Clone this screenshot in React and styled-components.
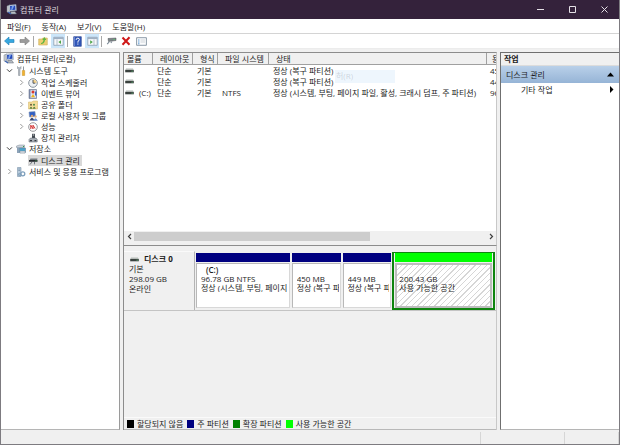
import React, { useState } from 'react'
import styled, { createGlobalStyle, css } from 'styled-components'

const GlobalStyle = createGlobalStyle`
  * {
    box-sizing: border-box;
  }

  body {
    margin: 0;
    background: #f0f0f0;
    color: #1c1c1c;
    font-family: "Open Sans", "Noto Sans CJK KR", sans-serif;
    font-size: 8px;
    line-height: 11px;
  }

  button {
    padding: 0;
    border: 0;
    background: none;
    color: inherit;
    font: inherit;
  }

  svg {
    display: block;
    flex: none;
  }
`

const Window = styled.div`
  min-height: 100vh;
  display: flex;
  flex-direction: column;
  border: 1px solid #7d7b80;
  border-top: 0;
`

const TitleBar = styled.header`
  height: 19px;
  display: flex;
  align-items: center;
  gap: 3px;
  padding-left: 5px;
  background: #34223b;
  color: #dcd8de;
`

const Title = styled.h1`
  flex: 1;
  margin: 0;
  font-size: 8px;
  font-weight: 400;
`

const WindowButton = styled.button`
  width: 29px;
  height: 19px;
  display: flex;
  align-items: center;
  justify-content: center;
`

const MenuBar = styled.nav`
  height: 15px;
  display: flex;
  align-items: center;
  gap: 11px;
  padding-left: 6px;
  background: #fff;
  border-bottom: 1px solid #d4d4d4;
`

const ToolBar = styled.div`
  height: 15px;
  display: flex;
  align-items: center;
  gap: 1px;
  padding-left: 1px;
  background: #fff;
  border-bottom: 1px solid #ececec;
`

const ToolButton = styled.button`
  width: 14px;
  height: 14px;
  display: flex;
  align-items: center;
  justify-content: center;
  background: ${(props) => (props.$active ? '#cce6fa' : 'transparent')};
`

const Separator = styled.span`
  width: 1px;
  height: 11px;
  margin: 0 1px;
  background: #a8a8a8;
`

const Panels = styled.main`
  flex: 1;
  display: flex;
  gap: 3px;
  padding-top: 3px;
`

const sunken = css`
  border: 1px solid #9a9a9a;
  border-bottom-color: #b5b5b5;
`

const TreePanel = styled.aside`
  ${sunken}
  flex: 0 0 119px;
  background: #fff;
  border-left: 0;
  overflow: hidden;
`

const TreeList = styled.ul`
  margin: 0;
  padding: 1px 0 0;
  list-style: none;
`

const TreeRow = styled.div`
  height: 11px;
  display: flex;
  align-items: center;
  gap: 3px;
  padding-left: ${(props) => [2, 4, 16][props.$level]}px;
  white-space: nowrap;
`

const Toggle = styled.button`
  width: 8px;
  height: 11px;
  display: flex;
  align-items: center;
  justify-content: center;
`

const TreeLabel = styled.span`
  height: 11px;
  display: flex;
  align-items: center;
  gap: 3px;
  padding-right: 2px;
  background: ${(props) => (props.$selected ? '#d9d9d9' : 'transparent')};
`

const Center = styled.section`
  flex: 1;
  min-width: 0;
  display: flex;
  flex-direction: column;
`

const VolumePane = styled.div`
  ${sunken}
  position: relative;
  flex: 1 1 194px;
  display: flex;
  flex-direction: column;
  justify-content: space-between;
  background: #fff;
  border-color: #8c8c8c;
  border-right-color: #c8c8c8;
  overflow: hidden;
`

const VolumeTable = styled.table`
  width: 100%;
  table-layout: fixed;
  border-collapse: separate;
  border-spacing: 0;

  th {
    height: 12px;
    padding: 0 0 0 7px;
    background: #f0f0f0;
    border-right: 1px solid #a0a0a0;
    border-bottom: 1px solid #a0a0a0;
    font-weight: 400;
    text-align: left;
    white-space: nowrap;
    overflow: hidden;
  }

  th:first-child {
    padding-left: 3px;
  }

  th:last-child {
    padding-left: 5px;
    border-right: 0;
  }

  td {
    height: 11px;
    padding: 0 0 0 4px;
    white-space: nowrap;
    overflow: hidden;
  }

  td:first-child {
    padding-left: 1px;
  }

  td:last-child {
    padding-left: 3px;
  }
`

const Column = styled.col`
  width: ${(props) => props.$width}px;
`

const VolumeName = styled.span`
  display: flex;
  align-items: center;
  gap: 5px;
`

const FadingMenuItem = styled.span`
  position: absolute;
  top: 17px;
  left: 211px;
  width: 60px;
  height: 13px;
  padding-left: 1px;
  background: rgba(222, 238, 252, 0.5);
  color: rgba(120, 130, 145, 0.3);
`

const ScrollBar = styled.div`
  height: 14px;
  display: flex;
  align-items: center;
  padding-bottom: 3px;
  background: #f0f0f0;
`

const ScrollButton = styled.button`
  width: 10px;
  height: 11px;
  display: flex;
  align-items: center;
  justify-content: center;
`

const ScrollTrack = styled.div`
  flex: 1;
`

const ScrollThumb = styled.div`
  width: 67%;
  height: 9px;
  background: #cdcdcd;
`

const DiskPane = styled.div`
  flex: 1 1 184px;
  display: flex;
  flex-direction: column;
  justify-content: space-between;
  border-left: 1px solid #8c8c8c;
  border-right: 1px solid #c8c8c8;
`

const DiskRow = styled.div`
  display: flex;
  align-items: stretch;
  margin-top: 5px;
  border-bottom: 1px solid #c4c4c4;
`

const DiskInfo = styled.div`
  flex: 0 0 71px;
  padding: 2px 0 16px 5px;
  border-top: 1px solid #fafafa;
  border-right: 1px solid #b4b4b4;
  line-height: 10px;
`

const DiskName = styled.div`
  display: flex;
  align-items: center;
  gap: 5px;
  padding-left: 1px;
  font-weight: 700;
`

const Partitions = styled.div`
  flex: 1;
  min-width: 0;
  display: flex;
  gap: 2px;
  padding: 1px 1px 0 1px;
`

const Partition = styled.div`
  flex: ${(props) => props.$size} 1 0;
  min-width: 0;
  display: flex;
  flex-direction: column;
  gap: 1px;
  padding-top: 1px;
  padding-bottom: 2px;
`

const ExtendedPartition = styled.div`
  flex: 97 1 0;
  min-width: 0;
  display: flex;
  flex-direction: column;
  gap: 1px;
  padding: 0 1px;
  margin-left: -1px;
  border: 2px solid #0f840f;
  border-top-width: 1px;
`

const PartitionBar = styled.div`
  height: 9px;
  background: ${(props) => props.$color};
`

const PartitionBody = styled.div`
  flex: 1;
  padding: 1px 1px 0 4px;
  border: 1px solid #b8b8b8;
  border-right-color: #d8d8d8;
  border-bottom-color: #d8d8d8;
  background: #fff;
  line-height: 9px;
  white-space: nowrap;
  overflow: hidden;

  ${(props) => props.$free && css`
    border: 2px solid #bdbdbd;
    padding: 0 2px;
    background: repeating-linear-gradient(135deg, #fff 0 3px, #d6d6d6 3px 4px);
  `}
`

const PartitionText = styled.div`
  height: 9px;
  overflow: hidden;
`

const PartitionName = styled.div`
  height: 9px;
  padding-left: 5px;
  font-weight: 600;
`

const Legend = styled.ul`
  height: 13px;
  display: flex;
  align-items: center;
  gap: 4px;
  margin: 0;
  padding: 0 3px;
  border-top: 1px solid #fafafa;
  border-bottom: 1px solid #b8b8b8;
  list-style: none;
  white-space: nowrap;
`

const LegendItem = styled.li`
  display: flex;
  align-items: center;
  gap: 3px;
`

const Swatch = styled.span`
  width: 7px;
  height: 8px;
  background: ${(props) => props.$color};
`

const ActionsPanel = styled.aside`
  ${sunken}
  flex: 0 0 119px;
  background: #fff;
  border-left-color: #6f6f6f;
  border-top-color: #6f6f6f;
  border-right: 0;
`

const ActionsTitle = styled.h2`
  height: 13px;
  margin: 0;
  padding-left: 3px;
  background: #f0f0f0;
  border-bottom: 1px solid #dcdcdc;
  font-size: 8px;
  font-weight: 700;
  line-height: 12px;
`

const ActionButton = styled.button`
  width: 100%;
  height: ${(props) => (props.$group ? 17 : 13)}px;
  display: flex;
  align-items: center;
  justify-content: space-between;
  padding: 0 5px 0 ${(props) => (props.$group ? 5 : 20)}px;
  background: ${(props) => (props.$group ? 'linear-gradient(#b9d0e9, #96b4d6)' : 'transparent')};
`

const StatusBar = styled.footer`
  height: 14px;
  display: flex;
  justify-content: flex-end;
  padding-top: 2px;
`

const StatusCell = styled.div`
  width: ${(props) => props.$width}px;
  border-left: 1px solid #d6d6d6;
`

const ComputerIcon = () => (
  <svg width="11" height="11" viewBox="0 0 11 11">
    <path d="M1 2l3-1v8l-3-1z" fill="#c9cdd2" stroke="#7d858e" strokeWidth=".5" />
    <path d="M3 1.2l7-.7.4 6-7 .7z" fill="#dfe6ee" stroke="#8190a6" strokeWidth=".6" />
    <path d="M4 2l5.2-.5.3 4.2-5.2.5z" fill="#2449b8" />
    <path d="M6 2l2 0-1.5 3.8-1.5.1z" fill="#7ba3ee" />
    <path d="M5 7.5h4l1.5 2.5h-6z" fill="#b5bbc3" stroke="#5f6771" strokeWidth=".5" />
    <path d="M2 8l3 2" stroke="#3a62b6" strokeWidth="1.2" />
  </svg>
)

const ToolsIcon = () => (
  <svg width="10" height="10" viewBox="0 0 10 10">
    <path d="M1.500.5v2l1 1v6h1.500v-6l1-1v-2l-1.200 1.300h-1z" fill="#b8bec6" stroke="#808891" strokeWidth=".5" />
    <path d="M7 .5h1v4h-1z" fill="#9097a0" />
    <path d="M6.300 4.500h2.400v5h-2.400z" fill="#f2b22d" stroke="#b67d14" strokeWidth=".4" />
  </svg>
)

const ClockIcon = () => (
  <svg width="10" height="10" viewBox="0 0 10 10">
    <circle cx="5" cy="5" r="4.300" fill="#eef1f4" stroke="#8b949e" strokeWidth="1" />
    <path d="M5 5v-3.600a3.600 3.600 0 0 1 3.600 3.600z" fill="#f4d28a" />
    <path d="M5 2v3.200h2.300" fill="none" stroke="#424b57" strokeWidth=".9" />
  </svg>
)

const EventIcon = () => (
  <svg width="10" height="10" viewBox="0 0 10 10">
    <path d="M1 .5h7.500v9h-7.500z" fill="#8290ad" stroke="#5c6781" strokeWidth=".5" />
    <path d="M2.500 1.200h5.500v7.600h-5.500z" fill="#dfe4f2" />
    <circle cx="5" cy="3" r="1.500" fill="#d9372c" />
    <path d="M3 8.300l2-3.300 2 3.300z" fill="#f0b51c" />
    <path d="M7 2.500h1.500v4h-1.500z" fill="#3b63c2" />
  </svg>
)

const SharedFolderIcon = () => (
  <svg width="10" height="10" viewBox="0 0 10 10">
    <path d="M.5 2h3.500l1-1h4.500v8h-9z" fill="#f3dc97" stroke="#d3b362" strokeWidth=".5" />
    <circle cx="3" cy="4.800" r="1" fill="#6c5b3a" />
    <circle cx="6" cy="4.800" r="1" fill="#4c8b4b" />
    <path d="M1.500 8.800q1.500-4 3 0zM4.700 8.800q1.500-4 3 0z" fill="#59803f" />
  </svg>
)

const UsersIcon = () => (
  <svg width="10" height="10" viewBox="0 0 10 10">
    <path d="M1 1l6-.5.500 5-6 .5z" fill="#315fc4" stroke="#8798b6" strokeWidth=".6" />
    <circle cx="4" cy="5" r="1.300" fill="#d7a374" />
    <path d="M1.500 9.500q2.500-5.500 5 0z" fill="#35426d" />
    <circle cx="7.500" cy="5.500" r="1.200" fill="#e1b587" />
    <path d="M5.200 9.700q2.300-5 4.600 0z" fill="#6a89c9" />
  </svg>
)

const PerformanceIcon = () => (
  <svg width="10" height="10" viewBox="0 0 10 10">
    <circle cx="5" cy="5" r="4.300" fill="#fff" stroke="#8d8d92" strokeWidth=".9" />
    <path d="M2.800 7v-3.800l2.200 3.600v-3.600l2 3.300" fill="none" stroke="#d22f2f" strokeWidth="1" />
  </svg>
)

const DeviceIcon = () => (
  <svg width="10" height="10" viewBox="0 0 10 10">
    <path d="M4 .8h3v4.700h-3z" fill="#424850" />
    <path d="M4.700 1.500h1.500v1h-1.500z" fill="#d6dade" />
    <path d="M1 6.500l1.500-1.500h5.500l1.200 1.500v2.500h-8.200z" fill="#a9afb6" stroke="#555c65" strokeWidth=".5" />
    <path d="M2 7h2v1.200h-2zM6.500 7h1.800v1.200h-1.800z" fill="#353a41" />
  </svg>
)

const StorageIcon = () => (
  <svg width="10" height="10" viewBox="0 0 10 10">
    <path d="M.5 2l3-1h5v2.500h-8z" fill="#cbd3dc" stroke="#7d8894" strokeWidth=".5" />
    <path d="M1 3.500h2.500v5.500h-2.500z" fill="#8da2b8" />
    <path d="M3.500 4h6v4.500h-6z" fill="#49a5cf" stroke="#60758c" strokeWidth=".5" />
    <path d="M7 2h1v1h-1z" fill="#31a043" />
    <path d="M4 7h5v2.200h-5z" fill="#d4dae1" stroke="#78838e" strokeWidth=".4" />
  </svg>
)

const DiskToolIcon = () => (
  <svg width="10" height="10" viewBox="0 0 10 10">
    <path d="M2.500 2.500h7l-.5 2h-7.500z" fill="#747a80" />
    <path d="M1 4h8.500v1.800h-8.500z" fill="#272b30" />
    <path d="M7.500 4.500h1v.7h-1z" fill="#4ed05b" />
    <path d="M4 6l-2 2.500M6.500 6v2.300" stroke="#6e767e" strokeWidth="1" />
  </svg>
)

const ServicesIcon = () => (
  <svg width="10" height="10" viewBox="0 0 10 10">
    <path d="M1.500.5h3.500v9h-3.500z" fill="#b8cbdc" stroke="#7892aa" strokeWidth=".6" />
    <path d="M2.300 2h1.900M2.300 3.500h1.900" stroke="#668099" strokeWidth=".6" />
    <circle cx="6.800" cy="6.800" r="2" fill="none" stroke="#7fa0bd" strokeWidth="1.300" />
    <circle cx="3.500" cy="7.500" r="1.200" fill="#9cb6cc" stroke="#6788a4" strokeWidth=".5" />
  </svg>
)

const DriveIcon = () => (
  <svg width="9" height="5" viewBox="0 0 9 5">
    <path d="M1 .5h7l.8 1.500h-8.600z" fill="#b6bbb8" />
    <path d="M.2 2h8.600v2.300h-8.600z" fill="#3a413e" />
    <path d="M6.500 2.700h1.300v.7h-1.300z" fill="#62cc7c" />
  </svg>
)

const Chevron = ({ open }) => (
  <svg width="7" height="7" viewBox="0 0 7 7">
    <path
      d={open ? 'M1 2.300l2.500 2.500 2.500-2.500' : 'M2.300 1l2.500 2.500-2.500 2.500'}
      fill="none"
      stroke={open ? '#404040' : '#9a9a9a'}
      strokeWidth="1"
    />
  </svg>
)

const ArrowIcon = ({ forward }) => (
  <svg width="11" height="10" viewBox="0 0 11 10">
    <path
      d={forward ? 'M10.500 5l-4.500-4v2.500h-5v3h5v2.500z' : 'M.5 5l4.500-4v2.500h5v3h-5v2.500z'}
      fill={forward ? '#9b9b9b' : '#36a7df'}
      stroke={forward ? '#7e7e7e' : '#1c7db5'}
      strokeWidth=".6"
    />
  </svg>
)

const FolderUpIcon = () => (
  <svg width="10" height="10" viewBox="0 0 10 10">
    <path d="M.7 3h3l1-1h4.600v7h-8.600z" fill="#edcf72" stroke="#cdae5c" strokeWidth=".6" />
    <path d="M3 7q2 0 2.500-3h-1.300l2.200-3 1.900 3h-1.300q-.5 4-4 4z" fill="#5fb644" />
  </svg>
)

const PaneIcon = ({ right }) => (
  <svg width="11" height="10" viewBox="0 0 11 10">
    <path d="M.8 1.300h9.400v8h-9.400z" fill="#f6f8fa" stroke="#8294a6" strokeWidth=".7" />
    <path d="M.8 1.300h9.400v1.800h-9.400z" fill="#9fb1c4" />
    <path d={right ? 'M7 3.500v5.500' : 'M4 3.500v5.500'} stroke="#9aa9b8" strokeWidth=".7" />
    <path d={right ? 'M3.200 4.300l2.600 1.800-2.600 1.800z' : 'M8 4.300l-2.600 1.800 2.600 1.800z'} fill="#4ba348" />
  </svg>
)

const HelpIcon = () => (
  <svg width="9" height="11" viewBox="0 0 9 11">
    <path d="M.7.700h7.600v9.600h-7.600z" fill="#3156b8" stroke="#1e3a8c" strokeWidth=".6" />
    <path d="M1.500 1v9" stroke="#8fa8e6" strokeWidth=".6" />
    <path d="M3.200 3.800q0-1.600 1.600-1.600t1.600 1.500q0 .8-1.500 1.700v1.200M4.900 7.500v1.100" fill="none" stroke="#fff" strokeWidth="1" />
  </svg>
)

const ConnectIcon = () => (
  <svg width="11" height="10" viewBox="0 0 11 10">
    <path d="M2 2.500l8-.5v2.500l-7.500 1z" fill="#7e8589" stroke="#4c5357" strokeWidth=".5" />
    <path d="M7.500 3h1.500v.8h-1.500z" fill="#56d067" />
    <path d="M3.500 5.500l-2.300 2.700M6 5.500l-1.200 1.500" stroke="#798794" strokeWidth="1.100" />
  </svg>
)

const DeleteIcon = () => (
  <svg width="10" height="10" viewBox="0 0 10 10">
    <path d="M1.500 1.500l7 7.300M8.500 1.200l-7 7.600" stroke="#cf1717" strokeWidth="2" />
  </svg>
)

const ListIcon = () => (
  <svg width="11" height="9" viewBox="0 0 11 9">
    <path d="M.6.700h9.800v7.600h-9.800z" fill="#fbfcfd" stroke="#6f8090" strokeWidth=".8" />
    <path d="M2 3h1.500M2 5h1.500M2 6.800h1.500" stroke="#4a90d0" strokeWidth=".9" />
    <path d="M4.500 3h4.500M4.500 5h4.500" stroke="#b3bbc2" strokeWidth=".6" />
  </svg>
)

const menus = ['파일(F)', '동작(A)', '보기(V)', '도움말(H)']

const volumes = [
  { id: 1, name: '', system: '', status: '정상 (복구 파티션)', capacity: '45' },
  { id: 2, name: '', system: '', status: '정상 (복구 파티션)', capacity: '44' },
  {
    id: 3,
    name: '(C:)',
    system: 'NTFS',
    status: '정상 (시스템, 부팅, 페이지 파일, 활성, 크래시 덤프, 주 파티션)',
    capacity: '96'
  }
]

const partitions = [
  { size: 94, name: '(C:)', capacity: '96.78 GB NTFS', status: '정상 (시스템, 부팅, 페이지' },
  { size: 49, name: '', capacity: '450 MB', status: '정상 (복구 파' },
  { size: 49, name: '', capacity: '449 MB', status: '정상 (복구 파' }
]

const legend = [
  { label: '할당되지 않음', color: '#000000' },
  { label: '주 파티션', color: '#000080' },
  { label: '확장 파티션', color: '#008000' },
  { label: '사용 가능한 공간', color: '#00ff00' }
]

const tree = [
  {
    label: '시스템 도구',
    icon: <ToolsIcon />,
    children: [
      { label: '작업 스케줄러', icon: <ClockIcon />, closed: true },
      { label: '이벤트 뷰어', icon: <EventIcon />, closed: true },
      { label: '공유 폴더', icon: <SharedFolderIcon />, closed: true },
      { label: '로컬 사용자 및 그룹', icon: <UsersIcon />, closed: true },
      { label: '성능', icon: <PerformanceIcon />, closed: true },
      { label: '장치 관리자', icon: <DeviceIcon /> }
    ]
  },
  {
    label: '저장소',
    icon: <StorageIcon />,
    children: [{ label: '디스크 관리', icon: <DiskToolIcon />, selected: true }]
  },
  { label: '서비스 및 응용 프로그램', icon: <ServicesIcon />, closed: true }
]

const TreeItem = ({ item, level }) => {
  const [open, setOpen] = useState(!item.closed)

  return (
    <li>
      <TreeRow $level={level}>
        <Toggle
          aria-label={item.label}
          aria-expanded={open}
          disabled={!item.children && !item.closed}
          onClick={() => setOpen(!open)}>
          {(item.children || item.closed) && <Chevron open={open} />}
        </Toggle>
        <TreeLabel $selected={item.selected}>
          {item.icon}
          {item.label}
        </TreeLabel>
      </TreeRow>
      {open && item.children && (
        <TreeList>
          {item.children.map((child) => (
            <TreeItem key={child.label} item={child} level={level + 1} />
          ))}
        </TreeList>
      )}
    </li>
  )
}

const App = () => {
  return (
    <>
      <GlobalStyle />
      <Window>
        <TitleBar>
          <ComputerIcon />
          <Title>컴퓨터 관리</Title>
          <WindowButton aria-label="최소화">
            <svg width="7" height="7" viewBox="0 0 7 7"><path d="M0 3.500h7" stroke="#e4e0e6" /></svg>
          </WindowButton>
          <WindowButton aria-label="최대화">
            <svg width="7" height="7" viewBox="0 0 7 7"><path d="M.5.500h6v6h-6z" fill="none" stroke="#e4e0e6" /></svg>
          </WindowButton>
          <WindowButton aria-label="닫기">
            <svg width="7" height="7" viewBox="0 0 7 7"><path d="M.5.500l6 6M6.500.500l-6 6" stroke="#e4e0e6" /></svg>
          </WindowButton>
        </TitleBar>

        <MenuBar>
          {menus.map((menu) => (
            <button key={menu}>{menu}</button>
          ))}
        </MenuBar>

        <ToolBar>
          <ToolButton aria-label="뒤로"><ArrowIcon /></ToolButton>
          <ToolButton aria-label="앞으로"><ArrowIcon forward /></ToolButton>
          <Separator />
          <ToolButton aria-label="한 수준 위로"><FolderUpIcon /></ToolButton>
          <ToolButton aria-label="콘솔 트리" $active><PaneIcon /></ToolButton>
          <Separator />
          <ToolButton aria-label="도움말"><HelpIcon /></ToolButton>
          <ToolButton aria-label="작업 창" $active><PaneIcon right /></ToolButton>
          <Separator />
          <ToolButton aria-label="연결"><ConnectIcon /></ToolButton>
          <ToolButton aria-label="삭제"><DeleteIcon /></ToolButton>
          <ToolButton aria-label="속성"><ListIcon /></ToolButton>
        </ToolBar>

        <Panels>
          <TreePanel>
            <TreeRow $level={0}>
              <TreeLabel>
                <ComputerIcon />
                컴퓨터 관리(로컬)
              </TreeLabel>
            </TreeRow>
            <TreeList>
              {tree.map((item) => (
                <TreeItem key={item.label} item={item} level={1} />
              ))}
            </TreeList>
          </TreePanel>

          <Center>
            <VolumePane>
              <VolumeTable>
                <colgroup>
                  <Column $width={29} />
                  <Column $width={40} />
                  <Column $width={25} />
                  <Column $width={51} />
                  <Column $width={218} />
                  <col />
                </colgroup>
                <thead>
                  <tr>
                    <th>볼륨</th>
                    <th>레이아웃</th>
                    <th>형식</th>
                    <th>파일 시스템</th>
                    <th>상태</th>
                    <th>용</th>
                  </tr>
                </thead>
                <tbody>
                  {volumes.map((volume) => (
                    <tr key={volume.id}>
                      <td>
                        <VolumeName>
                          <DriveIcon />
                          {volume.name}
                        </VolumeName>
                      </td>
                      <td>단순</td>
                      <td>기본</td>
                      <td>{volume.system}</td>
                      <td>{volume.status}</td>
                      <td>{volume.capacity}</td>
                    </tr>
                  ))}
                </tbody>
              </VolumeTable>
              <FadingMenuItem>허(R)</FadingMenuItem>
              <ScrollBar>
                <ScrollButton aria-label="왼쪽으로">
                  <svg width="5" height="7" viewBox="0 0 5 7"><path d="M4 1l-2.500 2.500 2.500 2.500" fill="none" stroke="#404040" strokeWidth="1.200" /></svg>
                </ScrollButton>
                <ScrollTrack>
                  <ScrollThumb />
                </ScrollTrack>
                <ScrollButton aria-label="오른쪽으로">
                  <svg width="5" height="7" viewBox="0 0 5 7"><path d="M1 1l2.500 2.500-2.500 2.500" fill="none" stroke="#404040" strokeWidth="1.200" /></svg>
                </ScrollButton>
              </ScrollBar>
            </VolumePane>

            <DiskPane>
              <DiskRow>
                <DiskInfo>
                  <DiskName>
                    <DriveIcon />
                    디스크 0
                  </DiskName>
                  <div>기본</div>
                  <div>298.09 GB</div>
                  <div>온라인</div>
                </DiskInfo>
                <Partitions>
                  {partitions.map((part) => (
                    <Partition key={part.capacity} $size={part.size}>
                      <PartitionBar $color="#000080" />
                      <PartitionBody>
                        <PartitionName>{part.name}</PartitionName>
                        <PartitionText>{part.capacity}</PartitionText>
                        <PartitionText>{part.status}</PartitionText>
                      </PartitionBody>
                    </Partition>
                  ))}
                  <ExtendedPartition>
                    <PartitionBar $color="#00ff00" />
                    <PartitionBody $free>
                      <PartitionName />
                      <PartitionText>200.43 GB</PartitionText>
                      <PartitionText>사용 가능한 공간</PartitionText>
                    </PartitionBody>
                  </ExtendedPartition>
                </Partitions>
              </DiskRow>
              <Legend>
                {legend.map((item) => (
                  <LegendItem key={item.label}>
                    <Swatch $color={item.color} />
                    {item.label}
                  </LegendItem>
                ))}
              </Legend>
            </DiskPane>
          </Center>

          <ActionsPanel>
            <ActionsTitle>작업</ActionsTitle>
            <ActionButton $group>
              디스크 관리
              <svg width="7" height="5" viewBox="0 0 7 5"><path d="M0 4.500l3.500-4 3.500 4z" /></svg>
            </ActionButton>
            <ActionButton>
              기타 작업
              <svg width="5" height="7" viewBox="0 0 5 7"><path d="M1 0l3.500 3.500-3.500 3.500z" /></svg>
            </ActionButton>
          </ActionsPanel>
        </Panels>

        <StatusBar>
          <StatusCell $width={84} />
          <StatusCell $width={54} />
          <StatusCell $width={1} />
        </StatusBar>
      </Window>
    </>
  )
}

export default App
